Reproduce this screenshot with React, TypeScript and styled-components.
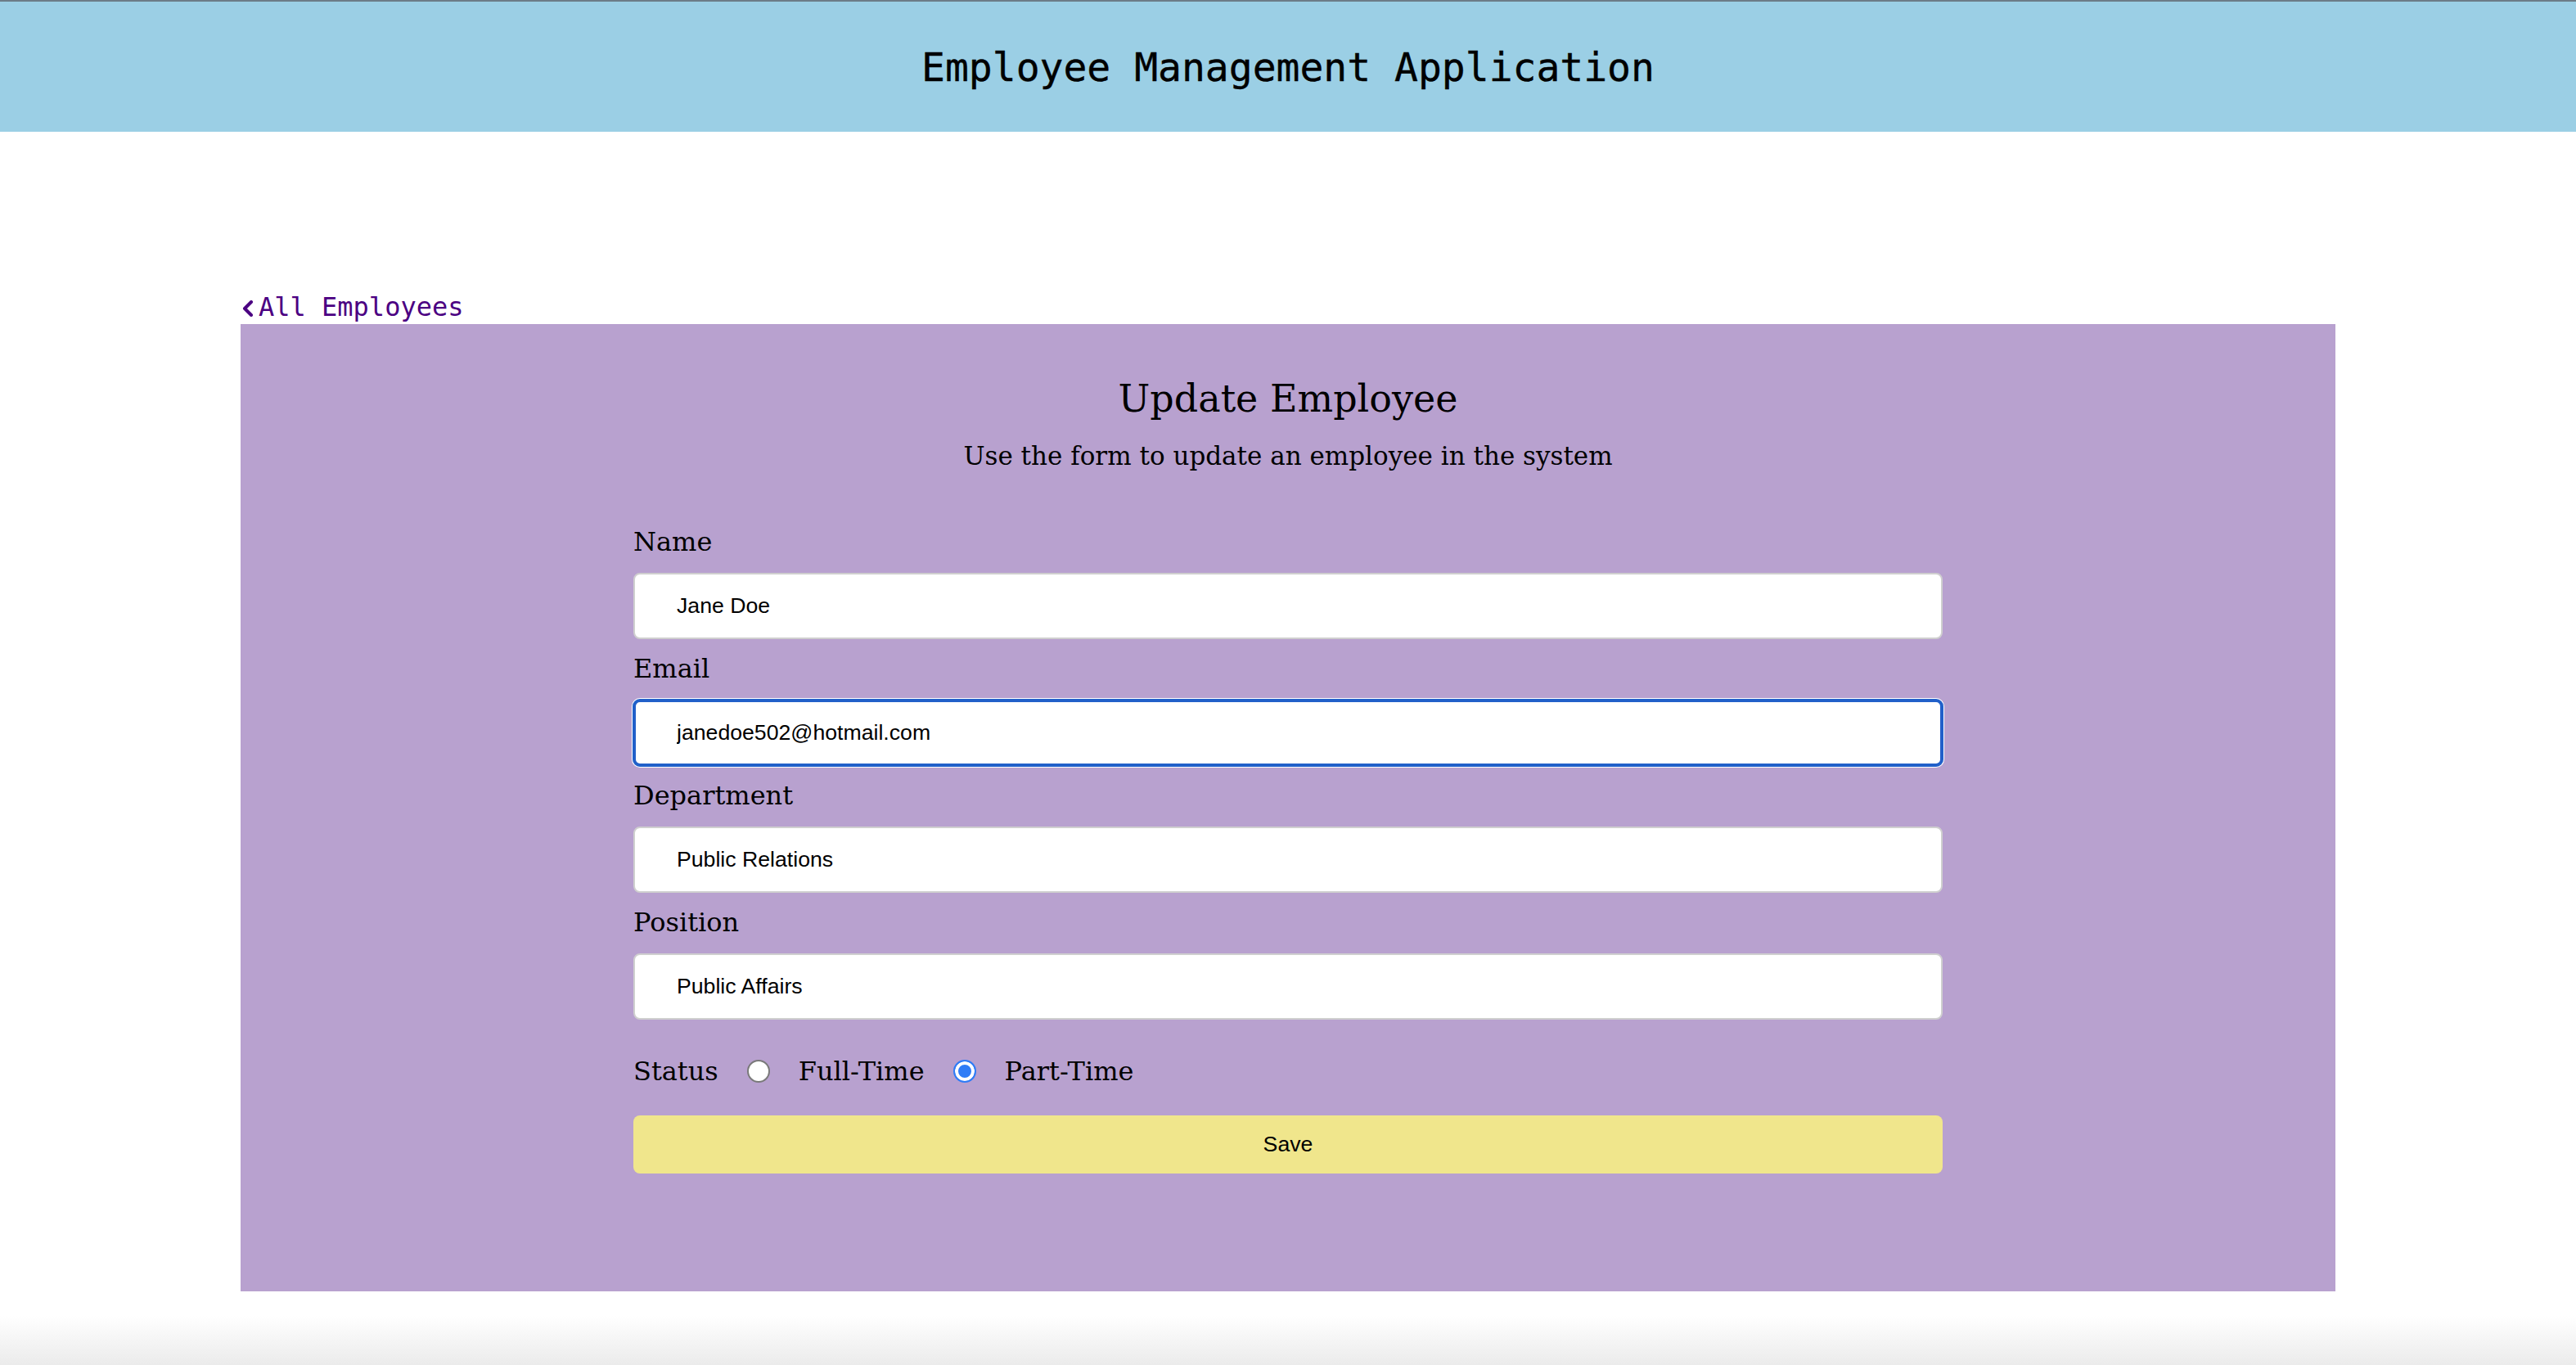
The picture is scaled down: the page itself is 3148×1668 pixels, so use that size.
import React, { useState } from 'react';
import styled, { createGlobalStyle } from 'styled-components';

const GlobalStyle = createGlobalStyle`
  html, body {
    margin: 0;
    padding: 0;
  }

  body {
    min-height: 100vh;
    background: linear-gradient(to bottom, #fff calc(100% - 60px), #ebebeb);
    font-family: "DejaVu Serif", serif;
    color: #000;
  }
`;

const Header = styled.header`
  height: 159px;
  border-top: 2px solid #6c7c87;
  background-color: #9bcfe5;
  display: flex;
  align-items: center;
  justify-content: center;
`;

const AppTitle = styled.h1`
  margin: 0;
  font-family: "DejaVu Sans Mono", monospace;
  font-weight: normal;
  font-size: 48px;
  line-height: 56px;
  -webkit-text-stroke: 0.4px #000;
`;

const Main = styled.main`
  width: 2560px;
  margin: 193px auto 0;
`;

const BackLink = styled.a`
  display: inline-flex;
  align-items: center;
  gap: 6px;
  height: 42px;
  line-height: 42px;
  font-family: "DejaVu Sans Mono", monospace;
  font-size: 32px;
  color: #4b0082;
  text-decoration: none;
  cursor: pointer;

  svg {
    margin-left: 2px;
    margin-top: 4px;
  }
`;

const Card = styled.section`
  background-color: #b8a1cf;
  padding: 63px 0 144px;
  display: flex;
  flex-direction: column;
  align-items: center;
`;

const Title = styled.h2`
  margin: 0;
  font-size: 46px;
  line-height: 56px;
  font-weight: normal;
`;

const Subtitle = styled.p`
  margin: 22px 0 65px;
  font-size: 31px;
  line-height: 40px;
`;

const Form = styled.form`
  width: 1600px;
  display: flex;
  flex-direction: column;
`;

const Field = styled.div`
  display: flex;
  flex-direction: column;
  margin-bottom: 16px;
`;

const Label = styled.label`
  font-size: 32px;
  line-height: 40px;
  margin-bottom: 18px;
`;

const TextInput = styled.input<{ $focused?: boolean }>`
  box-sizing: border-box;
  width: 100%;
  height: 81px;
  padding: 0 0 0 51px;
  border: 2px solid #cfcfcf;
  border-radius: 8px;
  background: #fff;
  font-family: "Liberation Sans", Arial, sans-serif;
  font-size: 26.67px;
  color: #000;
  outline: ${(p) => (p.$focused ? '4px solid #2160c9' : 'none')};
  outline-offset: -3px;
  box-shadow: ${(p) => (p.$focused ? '0 0 0 2px #fff' : 'none')};
`;

const StatusRow = styled.div`
  display: flex;
  align-items: center;
  gap: 35px;
  margin-top: 27px;
  height: 40px;
  font-size: 32px;
  line-height: 40px;
`;

const Radio = styled.input`
  appearance: none;
  margin: 0;
  width: 28px;
  height: 28px;
  border-radius: 50%;
  border: 2px solid #7a7a7a;
  background: #fff;
  box-sizing: border-box;

  &:checked {
    border-color: #2f7cf6;
    background: #2f7cf6;
    box-shadow: inset 0 0 0 4px #fff;
  }
`;

const SaveButton = styled.button`
  margin-top: 34px;
  height: 71px;
  border: none;
  border-radius: 8px;
  background-color: #f0e68c;
  font-family: "Liberation Sans", Arial, sans-serif;
  font-size: 26.67px;
  color: #000;
  cursor: pointer;
`;

const ChevronLeft = () => (
  <svg width="14" height="20" viewBox="0 0 14 20" fill="none">
    <polyline
      points="11,2 3,10 11,18"
      stroke="#4b0082"
      strokeWidth="4"
      strokeLinecap="round"
      strokeLinejoin="round"
    />
  </svg>
);

export default function App() {
  const [form, setForm] = useState({
    name: 'Jane Doe',
    email: 'janedoe502@hotmail.com',
    department: 'Public Relations',
    position: 'Public Affairs',
    status: 'part-time',
  });

  const update = (key: keyof typeof form) => (e: React.ChangeEvent<HTMLInputElement>) =>
    setForm({ ...form, [key]: e.target.value });

  return (
    <>
      <GlobalStyle />
      <Header>
        <AppTitle>Employee Management Application</AppTitle>
      </Header>
      <Main>
        <BackLink>
          <ChevronLeft />
          All Employees
        </BackLink>
        <Card>
          <Title>Update Employee</Title>
          <Subtitle>Use the form to update an employee in the system</Subtitle>
          <Form onSubmit={(e) => e.preventDefault()}>
            <Field>
              <Label htmlFor="name">Name</Label>
              <TextInput id="name" value={form.name} onChange={update('name')} />
            </Field>
            <Field>
              <Label htmlFor="email">Email</Label>
              <TextInput id="email" $focused value={form.email} onChange={update('email')} />
            </Field>
            <Field>
              <Label htmlFor="department">Department</Label>
              <TextInput id="department" value={form.department} onChange={update('department')} />
            </Field>
            <Field>
              <Label htmlFor="position">Position</Label>
              <TextInput id="position" value={form.position} onChange={update('position')} />
            </Field>
            <StatusRow>
              <span>Status</span>
              <Radio
                type="radio"
                name="status"
                value="full-time"
                checked={form.status === 'full-time'}
                onChange={update('status')}
              />
              <span>Full-Time</span>
              <Radio
                type="radio"
                name="status"
                value="part-time"
                checked={form.status === 'part-time'}
                onChange={update('status')}
              />
              <span>Part-Time</span>
            </StatusRow>
            <SaveButton type="submit">Save</SaveButton>
          </Form>
        </Card>
      </Main>
    </>
  );
}
